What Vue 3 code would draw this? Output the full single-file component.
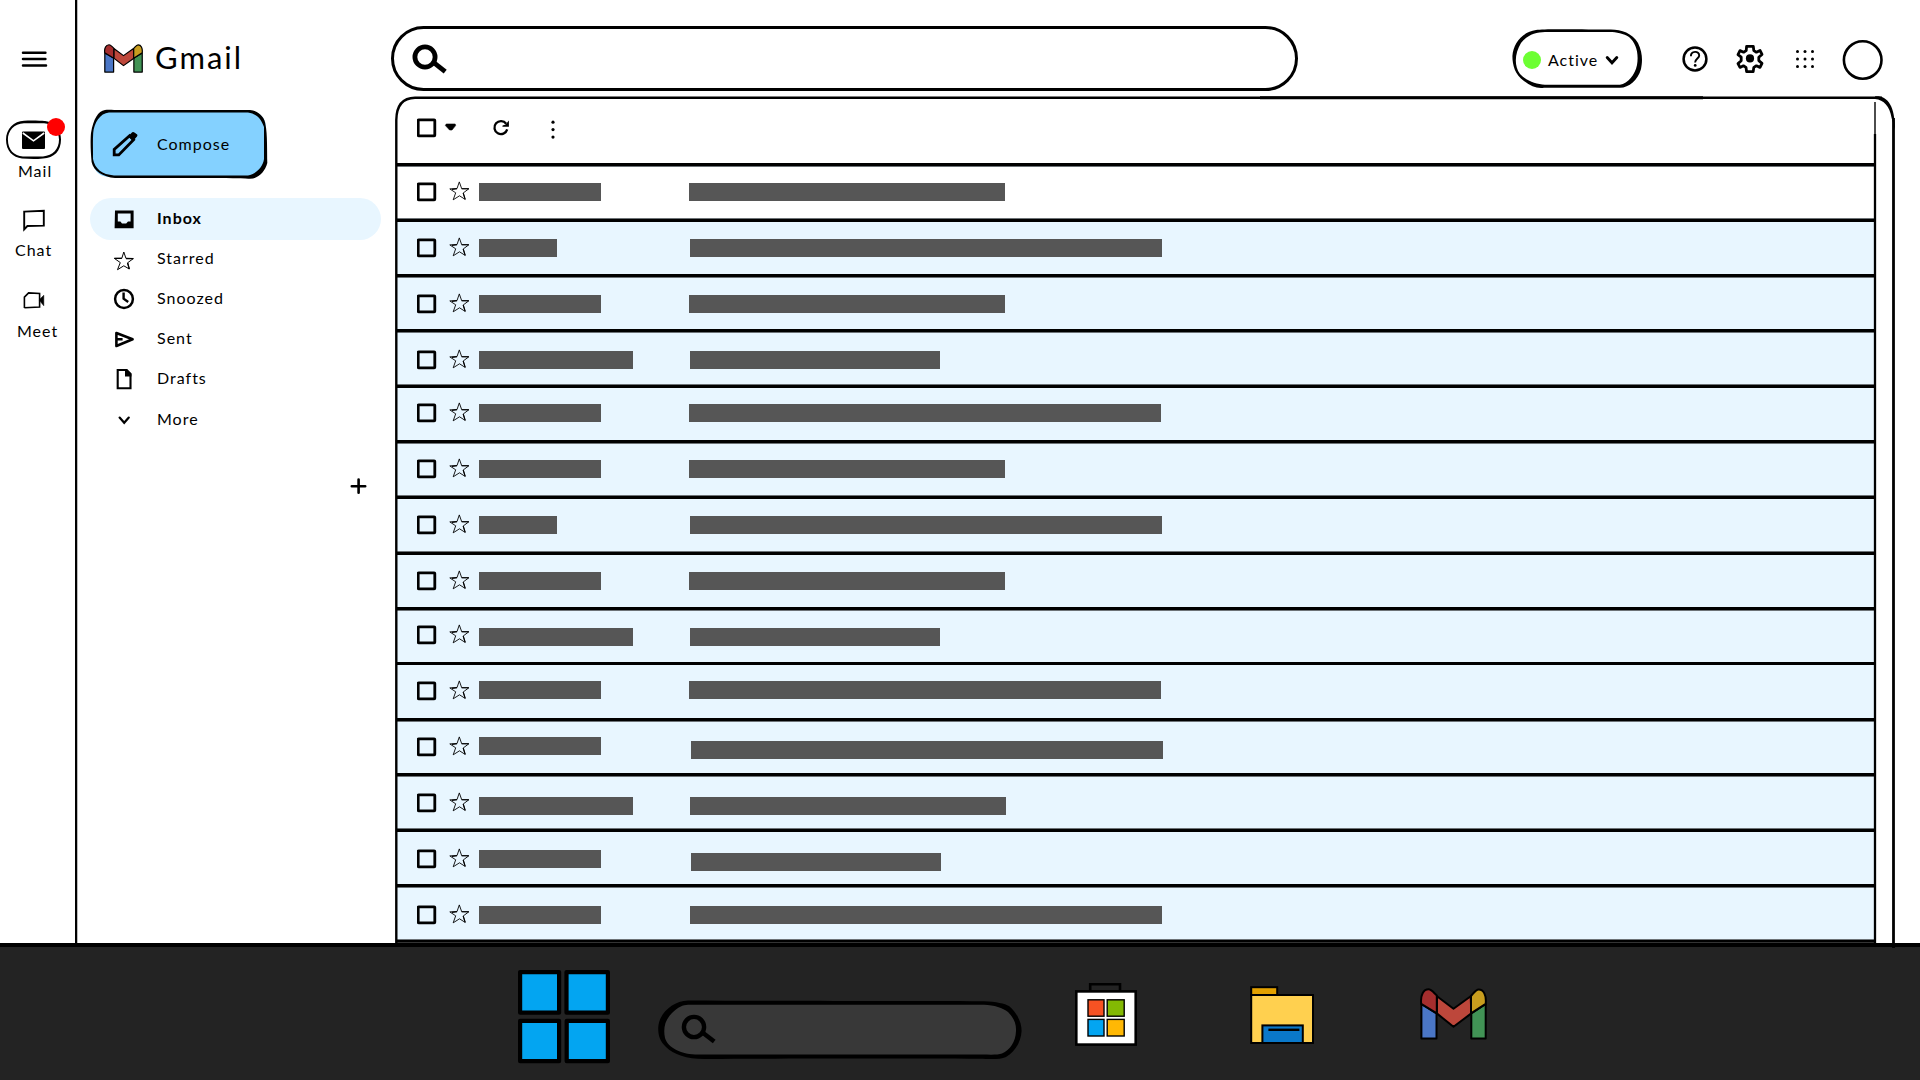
<script setup>
const folders = [
  { id: 'inbox', label: 'Inbox', active: true },
  { id: 'starred', label: 'Starred' },
  { id: 'snoozed', label: 'Snoozed' },
  { id: 'sent', label: 'Sent' },
  { id: 'drafts', label: 'Drafts' },
  { id: 'more', label: 'More' },
]

// h: row height; check/from/subject: offset of each item from the row's top line
const mails = [
  { h: 56, check: 20, from: 20, subject: 20, fw: 122, sx: 689.3, sw: 315.4, edge: 'below' },
  { h: 55, check: 20, from: 20, subject: 20, fw: 78, sx: 689.7, sw: 472.8, edge: 'above' },
  { h: 55, check: 21, from: 21, subject: 21, fw: 122, sx: 689.3, sw: 315.4, edge: 'below' },
  { h: 56, check: 22, from: 22, subject: 22, fw: 154, sx: 690, sw: 250, edge: 'below' },
  { h: 55, check: 19, from: 19, subject: 19, fw: 122, sx: 689, sw: 472, edge: 'above' },
  { h: 56, check: 20, from: 20, subject: 20, fw: 122, sx: 689.3, sw: 315.4, edge: 'below' },
  { h: 56, check: 20, from: 20, subject: 20, fw: 78, sx: 689.7, sw: 472.8, edge: 'above' },
  { h: 55, check: 20, from: 20, subject: 20, fw: 122, sx: 689.3, sw: 315.4, edge: 'above' },
  { h: 55, check: 19, from: 21, subject: 21, fw: 154, sx: 690, sw: 250, edge: 'below' },
  { h: 56, check: 20, from: 19, subject: 19, fw: 122, sx: 689, sw: 472, edge: 'none' },
  { h: 55, check: 20, from: 19, subject: 23, fw: 122, sx: 691, sw: 472.4, edge: 'below' },
  { h: 56, check: 21, from: 24, subject: 24, fw: 154, sx: 690, sw: 316, edge: 'below' },
  { h: 55, check: 21, from: 21, subject: 24, fw: 122, sx: 691, sw: 250, edge: 'above' },
  { h: 56, check: 22, from: 22, subject: 22, fw: 122, sx: 690, sw: 472, edge: 'below' },
]
const FROM_X = 479
const px = (n) => n + 'px'
</script>

<template>
  <div class="screen">
    <svg class="defs" width="0" height="0" aria-hidden="true">
      <symbol id="gmail-mark" viewBox="0 0 67 52" preserveAspectRatio="none">
        <g stroke="#000" stroke-linejoin="round">
          <path d="M1.4 16 L16.5 25.3 V50.4 H1.4Z" fill="#4a76c6" />
          <path d="M65.7 16 L51.3 25.3 V50.4 H65.7Z" fill="#419355" />
          <path d="M17 8.2 L33.5 20.8 L50.7 8.2 L51.3 25.4 L33.5 38.8 L16.8 25.4Z" fill="#bd473b" />
          <path d="M1.2 15.8 C.2 7 3.5 1.3 8.6 1.3 C11.5 1.3 14 5 16.8 7.4 V25.4Z" fill="#a52e2e" />
          <path d="M65.7 15.8 C66.6 7 63.5 1.5 58.7 1.5 C55.5 1.5 53.5 5.5 51 8 V25.4Z" fill="#c89d1e" />
        </g>
      </symbol>
      <symbol id="box" viewBox="0 0 20 20">
        <rect x="1.2" y="1.8" width="16.6" height="16" rx=".6" fill="none" stroke="#000" stroke-width="2.8" />
      </symbol>
      <symbol id="star" viewBox="0 0 21 20">
        <path d="M10.3 .9 L12.7 7.7 L19.8 7.8 L14.2 12 L16.2 18.4 L10.5 14.8 L4.2 18.8 L6.7 11.8 L.8 7.9 L8 7.6Z" fill="none" stroke="#000" stroke-width=".9" />
        <path d="M12.7 7.7 L19.8 7.8 M14.2 12 L16.2 18.4 M3 8.4 L8 7.6" fill="none" stroke="#000" stroke-width="1.1" />
      </symbol>
      <symbol id="lens" viewBox="0 0 36 30">
        <circle cx="13" cy="13" r="10.1" fill="none" stroke="#000" />
        <path d="M21.5 18.4 L33.2 27.6" fill="none" stroke="#000" />
      </symbol>
    </svg>

    <div class="window">
      <nav class="rail">
        <svg class="burger" width="28" height="20" viewBox="0 0 28 20">
          <path d="M3 3.7H25.4M3 10H25.4M3 16.6H26" stroke="#000" stroke-width="2.5" stroke-linecap="round" />
        </svg>
        <div class="mail">
          <svg width="57" height="40" viewBox="0 0 57 40">
            <path fill-rule="evenodd" d="M19 .8 C30 .2 38 1.2 40 1 C50 2.6 56 10 56 19.6 C56 31 49 38.4 38 38.4 C30 39.4 24 38.8 17 38.6 C8 37.6 1 31 1 19.6 C1 9 9 1.2 19 .8Z M19 3.2 C9 3.6 2.8 11 2.9 19.6 C3 30 9 36 18 36.4 H38 C48 36 54 29 54 19.6 C54 11 48 3.6 39 3.2Z" />
            <rect x="17" y="11.4" width="23" height="17.6" rx="1" />
            <path d="M17.8 13 L28.5 20.8 L39.2 13" fill="none" stroke="#fff" stroke-width="1.6" />
          </svg>
          <i class="badge"></i>
        </div>
        <span class="t-mail">Mail</span>
        <svg class="chat" width="24" height="23" viewBox="0 0 24 23">
          <path d="M2.2 2.6 L21.8 1.8 V16.6 L5.4 17 L2.2 20.3Z" fill="none" stroke="#000" stroke-width="1.9" />
        </svg>
        <span class="t-chat">Chat</span>
        <svg class="meet" width="24" height="19" viewBox="0 0 24 19">
          <path d="M2.4 17 V6.2 L6.6 1.9 L17.6 2.4 V16 L2.4 16.8" fill="none" stroke="#000" stroke-width="1.6" />
          <path d="M17 9 L21.8 4.2 V14.8Z" stroke="#000" stroke-width=".5" />
        </svg>
        <span class="t-meet">Meet</span>
      </nav>

      <aside class="side">
        <div class="brand">
          <svg width="39" height="29"><use href="#gmail-mark" stroke-width="2.1" /></svg>
          <span>Gmail</span>
        </div>

        <div class="compose">
          <svg class="shape" width="179" height="71" viewBox="0 0 179 71">
            <path d="M18 2 H160 Q176 4 176 20 V52 Q174 68 158 68 H18 Q3 66 2.5 50 V22 Q4 4 18 2Z" fill="#84d1ff" />
            <path fill-rule="evenodd" d="M15 1 C18 .2 24 1 30 1 H160 C168 1.4 175 8 175.5 16 C177.5 24 177 44 177.3 54 C175 63 168 69.6 160 69.8 C150 68.8 60 69 25 69 C13 68 3.5 62 1.6 53 C.4 40 .4 30 1 24 C3.4 10 8 2 15 1Z M19 3.4 C10 4 4 14 3.2 24 C2.6 34 3.2 42 3 50 C5 60 12 65.6 24 66.4 H158 C166 65 173 58 174 50 V18 C171 9 166 4.6 158 3.4Z" />
          </svg>
          <div class="compose-body">
            <svg width="27" height="27" viewBox="0 0 27 27">
              <path d="M2.2 23.9 V18.4 L17.6 4.6 L21.6 8.8 L6.8 23.9Z" fill="none" stroke="#000" stroke-width="2.8" />
              <path d="M16 5.6 L20.2 1.2 Q21.4 .6 22.4 1.4 L25.2 3.6 Q25.8 4.6 25 5.6 L21 10Z" />
            </svg>
            <span>Compose</span>
          </div>
        </div>

        <ul class="folders">
          <li v-for="f in folders" :key="f.id" :class="['folder', f.id, { active: f.active }]">
            <svg width="24" height="26" viewBox="0 0 24 26">
              <template v-if="f.id === 'inbox'">
                <path fill-rule="evenodd" d="M3 5.5 H21.6 V23.2 H2.6Z M5.8 8.6 V16.6 H8.4 L10 18.4 H14.2 L16 16.6 H18.6 V8.6Z" />
              </template>
              <template v-else-if="f.id === 'starred'">
                <path d="M11.8 7 L14 13.5 L21.3 13.6 L15.6 17.8 L17.3 24 L11.8 20.8 L5.5 24.7 L8.3 17.6 L2.4 13.4 L9.8 13.3Z" fill="none" stroke="#000" stroke-width="1" />
                <path d="M14 13.5 L21.3 13.6 M15.6 17.8 L17.3 24 M2.4 13.4 L9.8 13.3" stroke="#000" stroke-width="1.3" />
              </template>
              <template v-else-if="f.id === 'snoozed'">
                <circle cx="12" cy="14" r="8.9" fill="none" stroke="#000" stroke-width="2.5" />
                <path d="M11.6 7.6 V13.6 L16.2 17" fill="none" stroke="#000" stroke-width="2.4" />
              </template>
              <template v-else-if="f.id === 'sent'">
                <path d="M4.4 8 L20.6 14.2 L4.4 21Z M4.4 14.2 H10.6" fill="none" stroke="#000" stroke-width="2.6" stroke-linejoin="round" />
              </template>
              <template v-else-if="f.id === 'drafts'">
                <path d="M5.7 5 H14.6 L18.5 9 V23.3 H5.7Z" fill="none" stroke="#000" stroke-width="2.1" />
                <path d="M13 4.2 H15 L19.4 8.8 V11.4 H13Z" />
              </template>
              <template v-else>
                <path d="M7.6 11.6 L12.2 16.8 L16.8 11.6" fill="none" stroke="#000" stroke-width="2.2" stroke-linecap="round" />
              </template>
            </svg>
            <span>{{ f.label }}</span>
          </li>
        </ul>

        <svg class="plus" width="18" height="18" viewBox="0 0 18 18">
          <path d="M1.8 9.3H15.2M8.6 2.6V15.8" stroke="#000" stroke-width="2.6" stroke-linecap="round" />
        </svg>
      </aside>

      <main class="main">
        <header class="top">
          <div class="search">
            <svg width="36" height="30"><use href="#lens" stroke-width="4.8" /></svg>
          </div>

          <div class="status">
            <svg class="shape" width="131" height="61" viewBox="0 0 131 61">
              <path fill-rule="evenodd" d="M24 1 C32 -.2 60 .4 98 .6 C109 .4 120 4 126 14 C131 24 130.4 33 129 40 C126 51 117 58.6 108 58.8 H32 C25 59.8 19 57.4 12 52 C3 46 .4 36 .4 27 C1.4 14 10 3 24 1Z M33 3 C24 3.2 15 6 9 14 C3 24 1.6 36 8 45 C15 52.4 24 55.4 33 55.8 H108 C116 54.4 123 46 125 36 C127 24 124 14 117 8 C112 4.6 104 3 98 3Z" />
            </svg>
            <div class="status-body">
              <i class="dot"></i>
              <span>Active</span>
              <svg width="14" height="11" viewBox="0 0 14 11">
                <path d="M2.2 2.6 L7 7.8 L11.8 2.6" fill="none" stroke="#000" stroke-width="2.9" stroke-linecap="round" />
              </svg>
            </div>
          </div>

          <svg class="help" width="28" height="28" viewBox="0 0 28 28">
            <circle cx="14" cy="14" r="11.4" fill="none" stroke="#000" stroke-width="2.5" />
            <path d="M9.9 11.2 C9.8 5.6 18.4 5.4 18.2 10.6 C18 13.6 14.2 13.6 14.1 17.6" fill="none" stroke="#000" stroke-width="1.9" />
            <circle cx="14.2" cy="20.4" r="1.4" />
          </svg>
          <svg class="gear" width="30" height="30" viewBox="0 0 30 30">
            <path d="M11.6 2.4 H18.3 L18.8 6.6 L21.4 8.2 L25 6.4 L27 10.4 L23.8 13.2 V16.6 L27 19.4 L25 23.4 L21.4 21.8 L18.8 23.4 L18.2 27.6 H11.6 L11 23.4 L8.4 21.8 L5 23.4 L3 19.6 L6.2 16.8 V13.2 L3 10.6 L5 6.6 L8.6 8.2 L11.2 6.6Z" fill="none" stroke="#000" stroke-width="2.8" stroke-linejoin="round" />
            <circle cx="15" cy="14.4" r="4.1" />
          </svg>
          <svg class="apps" width="20" height="20" viewBox="0 0 20 20">
            <template v-for="y in 3" :key="y">
              <circle v-for="x in 3" :key="x" :cx="x * 7.5 - 5" :cy="y * 7.5 - 5.1" r="1.5" />
            </template>
          </svg>
          <svg class="avatar" width="42" height="42" viewBox="0 0 42 42">
            <circle cx="20.7" cy="21" r="18.8" fill="none" stroke="#000" stroke-width="2.6" />
          </svg>
        </header>

        <section class="panel">
          <svg class="frame" width="1503" height="856" viewBox="0 0 1503 856">
            <path d="M1.3 847 V24 C1.5 9 8 2 20 1.8 H1487" fill="none" stroke="#000" stroke-width="2.4" />
            <path d="M865 1.8 H1308" stroke="#000" stroke-width="3" />
            <path d="M1480 .4 C1493 -.4 1500 10 1500 34 L1496.6 22 C1494.6 10 1489 4 1480 3Z" />
            <path d="M1498.5 22 V852" stroke="#000" stroke-width="2.8" />
            <path d="M1480 6 V40" stroke="#000" stroke-width="1.4" />
            <path d="M1480 38 V847" stroke="#000" stroke-width="2.3" />
          </svg>
          <div class="list">
            <div class="tools">
              <svg class="check" width="20" height="20"><use href="#box" /></svg>
              <svg class="caret" width="12" height="9" viewBox="0 0 12 9">
                <path d="M1.2 1 H10.2 L10.6 2.6 L7 7 H4.6 L.4 2.6Z" stroke="#000" stroke-width=".6" />
              </svg>
              <svg class="reload" width="18" height="18" viewBox="0 0 18 18">
                <path d="M14.2 4.8 A6.5 6.5 0 1 0 15.2 10.4" fill="none" stroke="#000" stroke-width="2.3" />
                <path d="M16.9 1.6 V7.8 H10.4 L10.6 6.6 L13.6 5.4Z" />
              </svg>
              <svg class="dots" width="6" height="20" viewBox="0 0 6 20">
                <circle cx="3" cy="2.2" r="1.6" /><circle cx="3" cy="9.6" r="1.6" /><circle cx="3" cy="17.1" r="1.6" />
              </svg>
            </div>
            <div
              v-for="(m, i) in mails"
              :key="i"
              :class="['row', m.edge, { read: i > 0 }]"
              :style="{ height: px(m.h) }"
            >
              <svg class="check" width="20" height="20" :style="{ marginTop: px(m.check - 4) }"><use href="#box" /></svg>
              <svg class="fav" width="21" height="20" :style="{ marginTop: px(m.check - 5) }"><use href="#star" /></svg>
              <i class="bar" :style="{ width: px(m.fw), marginTop: px(m.from - 3) }"></i>
              <i
                class="bar"
                :style="{ width: px(m.sw), marginTop: px(m.subject - 3), marginLeft: px(m.sx - FROM_X - m.fw) }"
              ></i>
            </div>
            <div class="end"></div>
          </div>
        </section>
      </main>
    </div>

    <footer class="taskbar">
      <svg class="win" width="93" height="94" viewBox="0 0 93 94">
        <g fill="#03a5f1" stroke="#000" stroke-width="4.2" stroke-linejoin="round">
          <rect x="2.1" y="2.1" width="39" height="40.6" />
          <rect x="48.5" y="2.1" width="41.4" height="40.6" />
          <rect x="2.1" y="50.8" width="39" height="40.4" />
          <rect x="48.7" y="50.8" width="41.2" height="40.4" />
        </g>
      </svg>
      <div class="finder">
        <svg class="shape" width="364" height="60" viewBox="0 0 364 60">
          <path d="M30 .4 C120 1 240 .8 326 1.2 C338 1.6 347 3.6 351 6 C359 13 363.6 22 363.6 31 C363 42 357 52 348 57 C342 60 330 59 322 58.8 C240 58.4 120 58.6 50 59 C30 59.6 16 55 8 47 C2 41 .2 36 .2 28 C.6 14 14 1 30 .4Z" />
          <path d="M30 4.8 H326 C336 5 345 8 350 12 C356 18 358.4 24 358 31 C357.6 42 352 50 344 53.6 C340 55 334 54.8 324 54.6 H42 C24 55 10 48 7 38 C5 28 7 20 14 13 C20 7 25 5 30 4.8Z" fill="#383838" />
        </svg>
        <svg class="finder-lens" width="36" height="30"><use href="#lens" stroke-width="4.4" /></svg>
      </div>
      <svg class="store" width="64" height="64" viewBox="0 0 64 64">
        <path d="M16.2 9 V2.3 H46 V9" fill="none" stroke="#000" stroke-width="2.6" />
        <rect x="2.3" y="9.4" width="59.4" height="53.2" fill="#fff" stroke="#000" stroke-width="2.6" />
        <g stroke="#000" stroke-width="1.4">
          <rect x="14" y="17.8" width="16" height="16.4" fill="#f65223" />
          <rect x="33.2" y="17.8" width="17" height="16.4" fill="#83b903" />
          <rect x="14" y="37.4" width="16" height="16.6" fill="#03a5f1" />
          <rect x="33.2" y="37.4" width="17" height="16.6" fill="#ffb804" />
        </g>
      </svg>
      <svg class="files" width="65" height="59" viewBox="0 0 65 59">
        <g stroke="#000" stroke-width="2">
          <rect x="1.2" y="1.2" width="26" height="9" fill="#e3a100" />
          <rect x="1.2" y="9" width="61.8" height="48" fill="#ffd04f" />
          <rect x="12.4" y="39.4" width="40.4" height="17.6" fill="#0a78c9" />
          <path d="M18.4 43.8 H49.4" stroke-width="2.4" />
        </g>
      </svg>
      <svg class="mail-app" width="67" height="52"><use href="#gmail-mark" stroke-width="2" /></svg>
    </footer>
  </div>
</template>

<style>
body {
  background: #fff;
}
</style>

<style scoped>
.screen {
  display: flex;
  flex-direction: column;
  width: 1920px;
  height: 1080px;
  overflow: hidden;
  background: #fff;
  color: #000;
  font: 16px/20px Lato, "Open Sans", sans-serif;
  letter-spacing: 1px;
}
svg {
  display: block;
  flex: none;
  overflow: visible;
}
.defs {
  position: absolute;
}
span {
  white-space: nowrap;
}
.window {
  display: flex;
  height: 943px;
  flex: none;
}

/* app rail */
.rail {
  display: flex;
  flex-direction: column;
  align-items: flex-start;
  width: 75px;
  flex: none;
  border-right: 2px solid #000;
  box-shadow: 1px 0 0 #bbb;
}
.burger {
  margin: 49px 0 0 20px;
}
.mail {
  position: relative;
  margin: 51px 0 0 5px;
}
.badge {
  position: absolute;
  left: 42px;
  top: -2px;
  width: 18px;
  height: 18px;
  border-radius: 50%;
  background: #f00;
}
.t-mail {
  margin: 1px 0 0 18px;
}
.chat {
  margin: 28px 0 0 22px;
}
.t-chat {
  margin: 8px 0 0 15px;
}
.meet {
  margin: 31px 0 0 22px;
}
.t-meet {
  margin: 11px 0 0 17px;
}

/* sidebar */
.side {
  display: flex;
  flex-direction: column;
  width: 318px;
  flex: none;
}
.brand {
  display: flex;
  align-items: center;
  height: 38px;
  margin: 39px 0 0 27px;
  gap: 12px;
  font-size: 31px;
  line-height: 38px;
  letter-spacing: 2px;
}
.brand span {
  margin-top: -2px;
}
.compose {
  display: grid;
  width: 179px;
  height: 71px;
  margin: 32px 0 0 13px;
}
.shape,
.compose-body,
.status-body,
.finder-lens {
  grid-area: 1 / 1;
}
.compose-body {
  display: flex;
  align-items: center;
  gap: 18px;
  padding-left: 22px;
  padding-bottom: 1px;
}
.folders {
  display: flex;
  flex-direction: column;
  width: 291px;
  margin: 18px 0 0 13px;
  padding: 0;
  list-style: none;
}
.folder {
  display: flex;
  align-items: center;
  gap: 21px;
  height: 40px;
  padding-left: 22px;
}
.folder.active {
  box-sizing: border-box;
  height: 42px;
  margin-bottom: -2px;
  padding-bottom: 2px;
  border-radius: 21px;
  background: #e8f6ff;
  font-weight: 700;
}
.folder.more {
  height: 42px;
  margin-bottom: -2px;
}
.plus {
  margin: 39px 0 0 273px;
}

/* top bar */
.main {
  width: 1525px;
  flex: none;
}
.top {
  display: flex;
  align-items: flex-start;
  height: 96px;
}
.search {
  box-sizing: border-box;
  width: 907px;
  height: 65px;
  flex: none;
  margin: 26px 0 0 -4px;
  padding: 15px 0 0 18px;
  border: 3px solid #000;
  border-radius: 33px;
}
.status {
  display: grid;
  width: 131px;
  height: 61px;
  margin: 29px 0 0 214px;
}
.status-body {
  display: flex;
  align-items: center;
  gap: 7px;
  padding-left: 11px;
}
.status-body svg {
  margin: 2px 0 0;
}
.status-body span {
  margin-top: 1px;
}
.dot {
  width: 18px;
  height: 18px;
  border-radius: 50%;
  background: #6dff33;
}
.help {
  margin: 45px 0 0 38px;
}
.gear {
  margin: 44px 0 0 26px;
}
.apps {
  margin: 49px 0 0 30px;
}
.avatar {
  margin: 39px 0 0 27px;
}

/* message list */
.panel {
  display: grid;
  height: 847px;
}
.frame,
.list {
  grid-area: 1 / 1;
}
.frame {
  z-index: 1;
}
.list {
  display: flex;
  flex-direction: column;
  width: 1478px;
  margin-left: 2px;
}
.tools {
  display: flex;
  align-items: flex-start;
  height: 67px;
}
.tools .check {
  margin-top: 22px;
}
.check {
  margin-left: 20px;
}
.caret {
  margin: 27px 0 0 8px;
}
.reload {
  margin: 23px 0 0 35px;
}
.dots {
  margin: 24px 0 0 40px;
}
.row {
  display: flex;
  align-items: flex-start;
  box-sizing: border-box;
  border-top: 3px solid #000;
}
.row.read {
  background: #e8f6ff;
}
.row.below {
  box-shadow: inset 0 1px 0 #6d7377;
}
.row.above {
  box-shadow: 0 -1px 0 #6d7377;
}
.fav {
  margin-left: 12px;
  margin-right: 9px;
}
.bar {
  height: 18px;
  flex: none;
  background: #565656;
}
.end {
  height: 2px;
  background: #000;
  box-shadow: 0 -1px 0 #6d7377, 0 1px 0 #333;
}

/* taskbar */
.taskbar {
  position: relative;
  display: flex;
  align-items: flex-start;
  box-sizing: border-box;
  height: 137px;
  flex: none;
  border-top: 4px solid #000;
  background: #232323;
}
.win {
  margin: 23px 0 0 518px;
}
.finder {
  display: grid;
  width: 364px;
  margin: 53px 0 0 47px;
}
.finder-lens {
  margin: 14px 0 0 23px;
}
.store {
  margin: 35px 0 0 52px;
}
.files {
  margin: 39px 0 0 112px;
}
.mail-app {
  margin: 41px 0 0 105px;
}
</style>
